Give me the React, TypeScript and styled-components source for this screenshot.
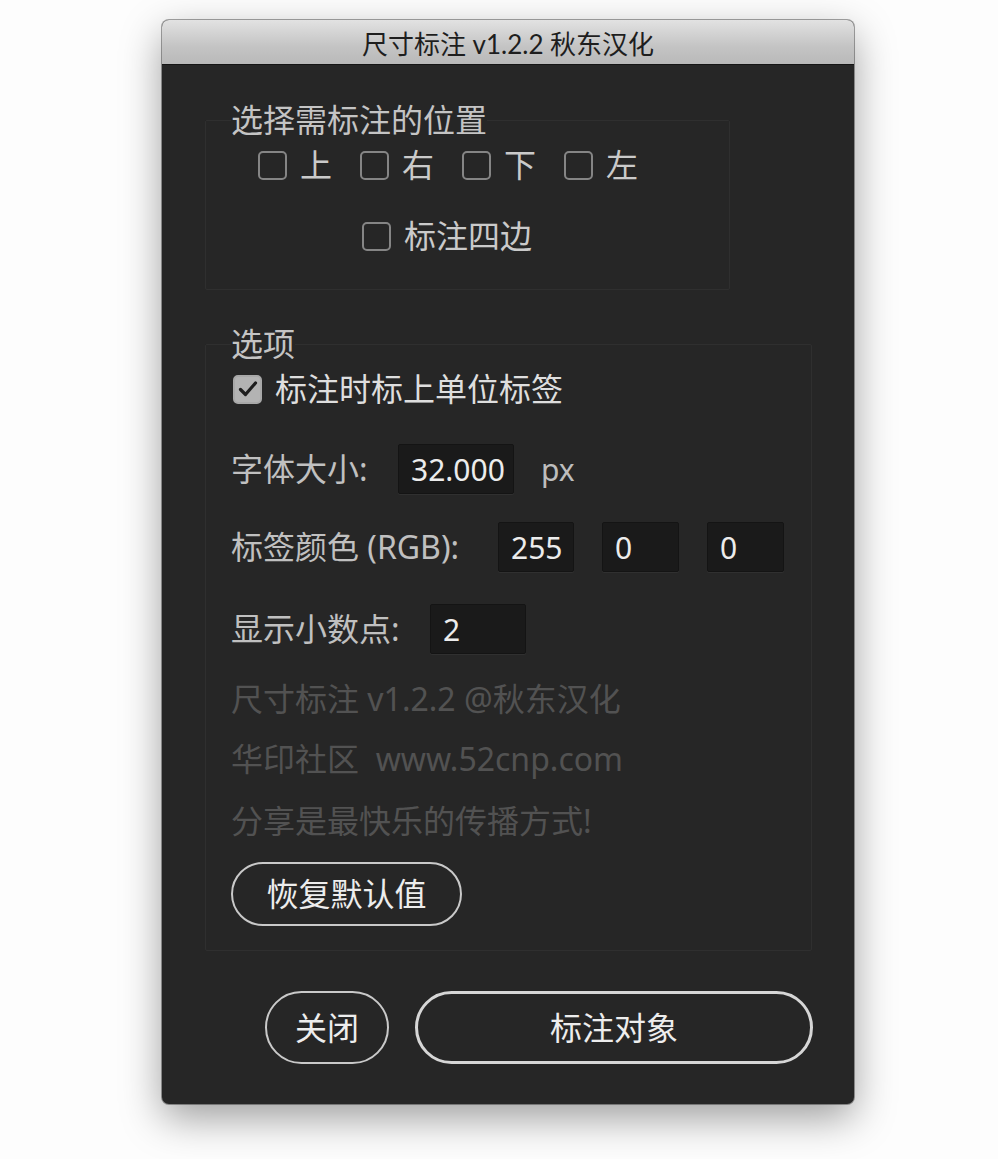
import React from "react";
import styled, { createGlobalStyle } from "styled-components";

const Global = createGlobalStyle`
  html, body { margin: 0; padding: 0; background: #ffffff; }
  body { font-family: "Noto Sans", "Noto Sans CJK SC", sans-serif; }
  * { box-sizing: border-box; }
`;

const Page = styled.div`
  width: 998px;
  height: 1159px;
  padding: 20px 0 0 162px;
  background: #fdfdfd;
`;

const Window = styled.div`
  width: 692px;
  height: 1084px;
  border-radius: 7px;
  overflow: hidden;
  background: #262626;
  box-shadow: 0 14px 40px rgba(0, 0, 0, 0.38), 0 0 0 1px rgba(0, 0, 0, 0.35);
  display: flex;
  flex-direction: column;
`;

const TitleBar = styled.div`
  height: 45px;
  flex: none;
  background: linear-gradient(#e2e2e2, #c4c4c4 60%, #b9b9b9);
  border-bottom: 1px solid #151515;
  display: flex;
  align-items: center;
  justify-content: center;
  font-family: Lato, "Noto Sans CJK SC", sans-serif;
  font-size: 26px;
  color: #1e1e1e;
`;

const Body = styled.div`
  padding: 35px 0 0 43px;
  display: flex;
  flex-direction: column;
`;

const Panel = styled.fieldset<{ $w: number; $mt?: number; $pb: number }>`
  width: ${(p) => p.$w}px;
  margin: ${(p) => p.$mt ?? 0}px 0 0 0;
  padding: 0 24px ${(p) => p.$pb}px 25px;
  border: 1px solid #2f2f2f;
  border-radius: 2px;
  min-width: 0;
`;

const Legend = styled.legend`
  padding: 0;
  font-size: 32px;
  line-height: 40px;
  height: 40px;
  color: #c4c4c4;
`;

const Row = styled.div<{ $mt: number; $ml?: number; $h?: number }>`
  display: flex;
  align-items: center;
  height: ${(p) => p.$h ?? 40}px;
  margin-top: ${(p) => p.$mt}px;
  margin-left: ${(p) => p.$ml ?? 0}px;
`;

const CheckItem = styled.label<{ $bright?: boolean }>`
  display: flex;
  align-items: center;
  gap: 13px;
  margin-right: 28px;
  font-size: 32px;
  line-height: 40px;
  color: ${(p) => (p.$bright ? "#dedede" : "#cacaca")};
`;

const Box = styled.span<{ $checked?: boolean }>`
  width: 29px;
  height: 29px;
  flex: none;
  border-radius: 5px;
  border: 2px solid ${(p) => (p.$checked ? "#a8a8a8" : "#858585")};
  background: ${(p) => (p.$checked ? "#b3b3b3" : "transparent")};
  display: flex;
  align-items: center;
  justify-content: center;
`;

const Label = styled.span<{ $w: number }>`
  width: ${(p) => p.$w}px;
  flex: none;
  font-size: 32px;
  line-height: 40px;
  color: #c0c0c0;
  white-space: nowrap;
`;

const Field = styled.div<{ $w: number; $mr?: number }>`
  width: ${(p) => p.$w}px;
  height: 50px;
  margin-right: ${(p) => p.$mr ?? 0}px;
  background: #1a1a1a;
  border: 1px solid #141414;
  box-shadow: 0 1px 0 #303030;
  border-radius: 2px;
  padding-left: 12px;
  display: flex;
  align-items: center;
  overflow: hidden;
  white-space: nowrap;
  font-size: 30px;
  color: #ececec;
  flex: none;
`;

const Unit = styled.span`
  margin-left: 27px;
  font-size: 30px;
  color: #bdbdbd;
`;

const Note = styled.div<{ $mt: number }>`
  margin-top: ${(p) => p.$mt}px;
  height: 40px;
  line-height: 40px;
  font-size: 32px;
  color: #525252;
  white-space: pre;
`;

const Pill = styled.button<{ $w: number; $h: number; $bw?: number; $mt?: number }>`
  width: ${(p) => p.$w}px;
  height: ${(p) => p.$h}px;
  margin-top: ${(p) => p.$mt ?? 0}px;
  border-radius: ${(p) => p.$h / 2}px;
  border: ${(p) => p.$bw ?? 2}px solid ${(p) => ((p.$bw ?? 2) > 2 ? "#d6d6d6" : "#c9c9c9")};
  background: transparent;
  color: #ededed;
  font-family: "Noto Sans", "Noto Sans CJK SC", sans-serif;
  font-size: 32px;
  line-height: 40px;
  padding: 0;
  display: flex;
  align-items: center;
  justify-content: center;
  flex: none;
`;

const Footer = styled.div`
  display: flex;
  gap: 26px;
  margin: 40px 0 0 60px;
`;

const Check = () => (
  <svg width="20" height="18" viewBox="0 0 20 18">
    <path d="M2.5 9.5 L7.5 14.5 L17.5 3" fill="none" stroke="#1e1e1e" strokeWidth="3.2" strokeLinecap="round" strokeLinejoin="round" />
  </svg>
);

export default function App() {
  return (
    <>
      <Global />
      <Page>
        <Window>
          <TitleBar>尺寸标注 v1.2.2 秋东汉化</TitleBar>
          <Body>
            <Panel $w={525} $pb={33}>
              <Legend>选择需标注的位置</Legend>
              <Row $mt={5} $ml={27}>
                <CheckItem><Box />上</CheckItem>
                <CheckItem><Box />右</CheckItem>
                <CheckItem><Box />下</CheckItem>
                <CheckItem><Box />左</CheckItem>
              </Row>
              <Row $mt={31} $ml={131}>
                <CheckItem><Box />标注四边</CheckItem>
              </Row>
            </Panel>

            <Panel $w={607} $mt={34} $pb={24}>
              <Legend>选项</Legend>
              <Row $mt={5} $ml={2}>
                <CheckItem $bright>
                  <Box $checked><Check /></Box>标注时标上单位标签
                </CheckItem>
              </Row>
              <Row $mt={35} $h={50}>
                <Label $w={167}>字体大小:</Label>
                <Field $w={116}>32.000</Field>
                <Unit>px</Unit>
              </Row>
              <Row $mt={28} $h={50}>
                <Label $w={267}>标签颜色 (RGB):</Label>
                <Field $w={76} $mr={28}>255</Field>
                <Field $w={77} $mr={28}>0</Field>
                <Field $w={77}>0</Field>
              </Row>
              <Row $mt={32} $h={50}>
                <Label $w={199}>显示小数点:</Label>
                <Field $w={96}>2</Field>
              </Row>
              <Note $mt={25}>尺寸标注 v1.2.2 @秋东汉化</Note>
              <Note $mt={20}>华印社区  www.52cnp.com</Note>
              <Note $mt={22}>分享是最快乐的传播方式!</Note>
              <Pill $w={231} $h={64} $mt={21}>恢复默认值</Pill>
            </Panel>

            <Footer>
              <Pill $w={124} $h={73}>关闭</Pill>
              <Pill $w={398} $h={73} $bw={3}>标注对象</Pill>
            </Footer>
          </Body>
        </Window>
      </Page>
    </>
  );
}
